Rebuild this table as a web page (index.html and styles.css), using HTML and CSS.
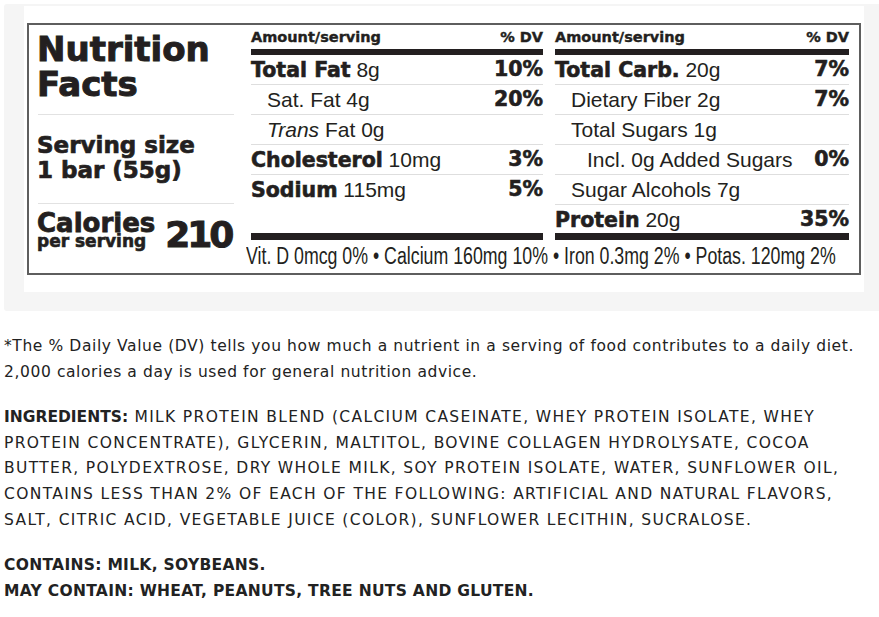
FILE: index.html
```html
<!DOCTYPE html>
<html lang="en">
<head>
<meta charset="utf-8">
<title>Nutrition Facts</title>
<link rel="stylesheet" href="styles.css">
</head>
<body>
<div class="page">
  <div class="panel">
    <div class="sheet">
      <div class="label">
        <div class="lead">
          <h1 class="title"><span>Nutrition</span><span>Facts</span></h1>
          <div class="serving"><span>Serving size</span><span>1 bar (55g)</span></div>
          <div class="calories">
            <div class="cal-text">
              <span class="cal-word">Calories</span>
              <span class="cal-sub">per serving</span>
            </div>
            <span class="cal-num">210</span>
          </div>
        </div>
        <div class="facts">
          <div class="cols">
            <div class="col">
              <div class="head"><span>Amount/serving</span><span>% DV</span></div>
              <div class="row"><span><b>Total Fat</b> 8g</span><b>10%</b></div>
              <div class="row ind1"><span>Sat. Fat 4g</span><b>20%</b></div>
              <div class="row ind1"><span><i>Trans</i> Fat 0g</span></div>
              <div class="row"><span><b>Cholesterol</b> 10mg</span><b>3%</b></div>
              <div class="row plain"><span><b>Sodium</b> 115mg</span><b>5%</b></div>
              <div class="bar"></div>
            </div>
            <div class="col">
              <div class="head"><span>Amount/serving</span><span>% DV</span></div>
              <div class="row"><span><b>Total Carb.</b> 20g</span><b>7%</b></div>
              <div class="row ind1"><span>Dietary Fiber 2g</span><b>7%</b></div>
              <div class="row ind1"><span>Total Sugars 1g</span></div>
              <div class="row ind2"><span>Incl. 0g Added Sugars</span><b>0%</b></div>
              <div class="row ind1"><span>Sugar Alcohols 7g</span></div>
              <div class="row plain short"><span><b>Protein</b> 20g</span><b>35%</b></div>
              <div class="bar"></div>
            </div>
          </div>
          <div class="minerals"><span class="minerals-text">Vit. D 0mcg 0% • Calcium 160mg 10% • Iron 0.3mg 2% • Potas. 120mg 2%</span></div>
        </div>
      </div>
    </div>
  </div>
  <div class="notes">
    <p class="dv">*The % Daily Value (DV) tells you how much a nutrient in a serving of food contributes to a daily diet.<br>2,000 calories a day is used for general nutrition advice.</p>
    <p class="ingredients"><strong>INGREDIENTS:</strong> MILK PROTEIN BLEND (CALCIUM CASEINATE, WHEY PROTEIN ISOLATE, WHEY<br>PROTEIN CONCENTRATE), GLYCERIN, MALTITOL, BOVINE COLLAGEN HYDROLYSATE, COCOA<br>BUTTER, POLYDEXTROSE, DRY WHOLE MILK, SOY PROTEIN ISOLATE, WATER, SUNFLOWER OIL,<br>CONTAINS LESS THAN 2% OF EACH OF THE FOLLOWING: ARTIFICIAL AND NATURAL FLAVORS,<br>SALT, CITRIC ACID, VEGETABLE JUICE (COLOR), SUNFLOWER LECITHIN, SUCRALOSE.</p>
    <p class="allergens"><strong>CONTAINS: MILK, SOYBEANS.</strong><br><strong>MAY CONTAIN: WHEAT, PEANUTS, TREE NUTS AND GLUTEN.</strong></p>
  </div>
</div>
</body>
</html>
```

FILE: styles.css
```css
* { box-sizing: border-box; }

body {
  margin: 0;
  background: #fff;
  color: #222;
  font-family: "DejaVu Sans", sans-serif;
  overflow-x: hidden;
}

.page {
  padding: 4px 0 0 4px;
}

.panel {
  background: #f5f5f5;
  padding: 2px 0 19px 20px;
  border-radius: 3px 0 0 3px;
}

.sheet {
  width: 840px;
  height: 286px;
  background: #fff;
  padding: 17px 3px;
}

.label {
  height: 252px;
  border: 2px solid #5e5e5e;
  display: flex;
  overflow: hidden;
  color: #231f20;
  font-family: "Liberation Sans", Arial, sans-serif;
}

.lead {
  width: 222px;
  flex: none;
  padding: 7px 17px 0 8px;
}

.title,
.serving,
.cal-word,
.cal-sub,
.cal-num,
.label b,
.head {
  font-family: "DejaVu Sans", sans-serif;
  font-weight: bold;
  -webkit-text-stroke: 0.6px #231f20;
}

.title {
  margin: 0 0 12px;
  font-size: 34px;
  line-height: 35px;
  -webkit-text-stroke: 1px #231f20;
}

.title span,
.serving span {
  display: block;
}

.serving {
  border-top: 1px solid #e2e2e2;
  margin-left: 1px;
  padding-top: 18px;
  font-size: 23px;
  line-height: 25px;
  -webkit-text-stroke: 0.7px #231f20;
}

.serving span {
  margin-left: -1px;
}

.calories {
  margin-top: 20px;
  margin-left: 1px;
  border-top: 1px solid #e2e2e2;
  display: flex;
  align-items: flex-start;
}

.cal-text {
  display: flex;
  flex-direction: column;
  padding-top: 7px;
  margin-left: -1px;
}

.cal-word {
  font-size: 26px;
  line-height: 24px;
  -webkit-text-stroke: 0.8px #231f20;
}

.cal-sub {
  font-size: 17px;
  line-height: 12px;
}

.cal-num {
  margin: 13px 0 0 10px;
  font-size: 36px;
  line-height: 36px;
  letter-spacing: -3px;
  -webkit-text-stroke: 1px #231f20;
}

.facts {
  flex: 1;
  display: flex;
  flex-direction: column;
  padding-right: 10px;
}

.cols {
  height: 215px;
  display: grid;
  grid-template-columns: 292px 294px;
  column-gap: 12px;
}

.col {
  display: flex;
  flex-direction: column;
}

.head {
  height: 30px;
  line-height: 24px;
  font-size: 14.5px;
  display: flex;
  justify-content: space-between;
  border-bottom: 6px solid #231f20;
  -webkit-text-stroke: 0.4px #231f20;
}

.row {
  height: 30px;
  line-height: 29px;
  font-size: 21px;
  display: flex;
  justify-content: space-between;
  border-bottom: 1px solid #dedede;
  white-space: nowrap;
}

.row b {
  font-size: 20.5px;
}

.row.plain { border-bottom: none; }
.row.short { height: 28px; }

.ind1 { padding-left: 16px; }
.ind2 { padding-left: 32px; }

.bar {
  margin-top: auto;
  height: 7px;
  background: #231f20;
}

.minerals {
  height: 33px;
  margin-left: -5px;
  line-height: 33px;
  font-size: 23px;
  white-space: nowrap;
}

.minerals-text {
  display: inline-block;
  transform: scaleX(0.772);
  transform-origin: 0 50%;
}

.notes {
  width: 871px;
  padding-top: 23px;
  font-size: 15.5px;
  line-height: 25.6px;
  color: #222;
}

.notes p {
  margin: 0 0 20px;
}

.notes .dv {
  letter-spacing: 0.6px;
}

.notes .ingredients {
  letter-spacing: 1.35px;
}

.notes .ingredients strong {
  letter-spacing: 0;
}

.notes .allergens {
  letter-spacing: 0.3px;
}

.notes strong {
  font-weight: bold;
}
```
